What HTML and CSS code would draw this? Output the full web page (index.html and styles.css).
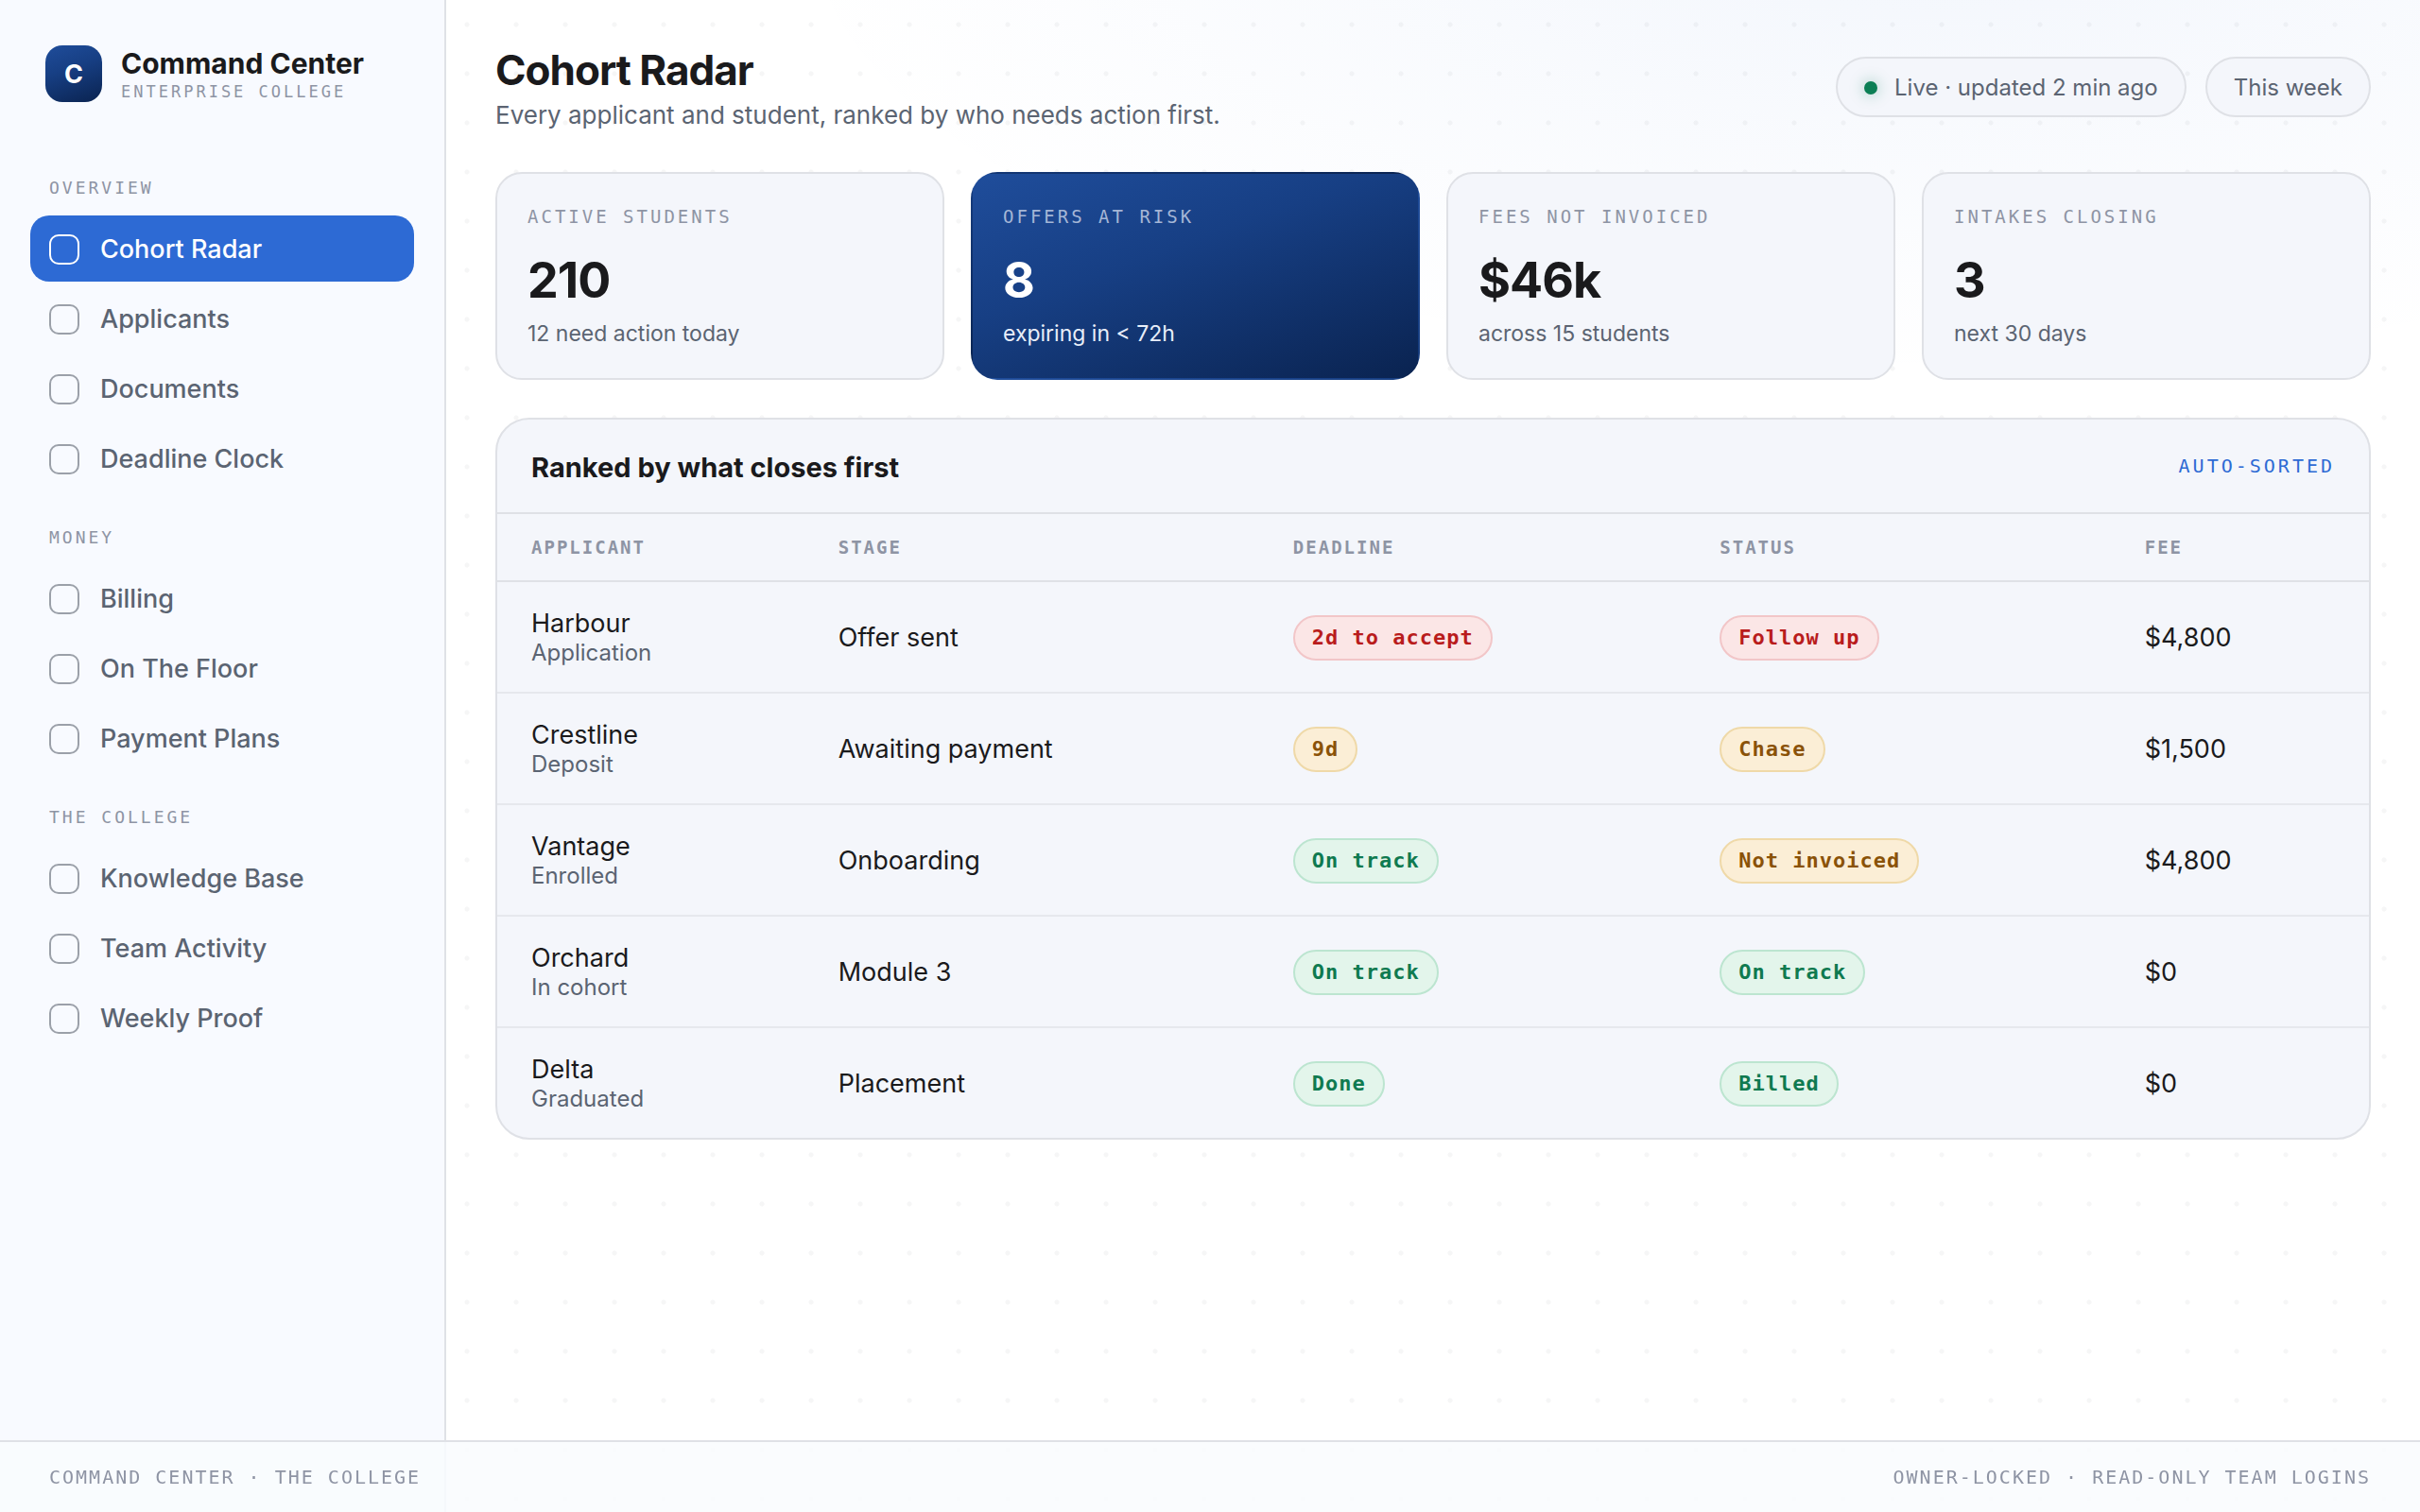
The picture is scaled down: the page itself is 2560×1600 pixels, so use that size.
FILE: index.html
```html
<!DOCTYPE html>
<html lang="en">
<head>
  <meta charset="utf-8">
  <meta name="viewport" content="width=device-width, initial-scale=1">
  <title>Command Center – Cohort Radar</title>
  <link rel="stylesheet" href="styles.css">
</head>
<body>
  <div class="app">
    <aside class="sidebar">
      <div class="brand">
        <div class="brand-mark">C</div>
        <div>
          <div class="brand-name">Command Center</div>
          <div class="brand-sub">ENTERPRISE COLLEGE</div>
        </div>
      </div>
      <nav class="nav">
        <section class="nav-group">
          <h2 class="nav-label">OVERVIEW</h2>
          <a class="nav-item is-active" href="#cohort-radar" aria-current="page"><span class="nav-icon"></span>Cohort Radar</a>
          <a class="nav-item" href="#applicants"><span class="nav-icon"></span>Applicants</a>
          <a class="nav-item" href="#documents"><span class="nav-icon"></span>Documents</a>
          <a class="nav-item" href="#deadline-clock"><span class="nav-icon"></span>Deadline Clock</a>
        </section>
        <section class="nav-group">
          <h2 class="nav-label">MONEY</h2>
          <a class="nav-item" href="#billing"><span class="nav-icon"></span>Billing</a>
          <a class="nav-item" href="#on-the-floor"><span class="nav-icon"></span>On The Floor</a>
          <a class="nav-item" href="#payment-plans"><span class="nav-icon"></span>Payment Plans</a>
        </section>
        <section class="nav-group">
          <h2 class="nav-label">THE COLLEGE</h2>
          <a class="nav-item" href="#knowledge-base"><span class="nav-icon"></span>Knowledge Base</a>
          <a class="nav-item" href="#team-activity"><span class="nav-icon"></span>Team Activity</a>
          <a class="nav-item" href="#weekly-proof"><span class="nav-icon"></span>Weekly Proof</a>
        </section>
      </nav>
    </aside>

    <main class="main">
      <header class="page-head">
        <div>
          <h1 class="page-title">Cohort Radar</h1>
          <p class="page-sub">Every applicant and student, ranked by who needs action first.</p>
        </div>
        <div class="page-tools">
          <div class="chip"><span class="live-dot"></span>Live · updated 2 min ago</div>
          <button class="chip" type="button">This week</button>
        </div>
      </header>

      <section class="stats">
        <article class="stat">
          <div class="stat-label">ACTIVE STUDENTS</div>
          <div class="stat-value">210</div>
          <div class="stat-note">12 need action today</div>
        </article>
        <article class="stat stat-accent">
          <div class="stat-label">OFFERS AT RISK</div>
          <div class="stat-value">8</div>
          <div class="stat-note">expiring in &lt; 72h</div>
        </article>
        <article class="stat">
          <div class="stat-label">FEES NOT INVOICED</div>
          <div class="stat-value">$46k</div>
          <div class="stat-note">across 15 students</div>
        </article>
        <article class="stat">
          <div class="stat-label">INTAKES CLOSING</div>
          <div class="stat-value">3</div>
          <div class="stat-note">next 30 days</div>
        </article>
      </section>

      <section class="panel">
        <div class="panel-head">
          <h2 class="panel-title">Ranked by what closes first</h2>
          <span class="panel-tag">AUTO-SORTED</span>
        </div>
        <table class="ranking">
          <thead>
            <tr>
              <th class="col-applicant" scope="col">APPLICANT</th>
              <th class="col-stage" scope="col">STAGE</th>
              <th class="col-deadline" scope="col">DEADLINE</th>
              <th class="col-status" scope="col">STATUS</th>
              <th class="col-fee" scope="col">FEE</th>
            </tr>
          </thead>
          <tbody>
            <tr>
              <td><div class="who">Harbour</div><div class="who-sub">Application</div></td>
              <td>Offer sent</td>
              <td><span class="pill pill-red">2d to accept</span></td>
              <td><span class="pill pill-red">Follow up</span></td>
              <td>$4,800</td>
            </tr>
            <tr>
              <td><div class="who">Crestline</div><div class="who-sub">Deposit</div></td>
              <td>Awaiting payment</td>
              <td><span class="pill pill-amber">9d</span></td>
              <td><span class="pill pill-amber">Chase</span></td>
              <td>$1,500</td>
            </tr>
            <tr>
              <td><div class="who">Vantage</div><div class="who-sub">Enrolled</div></td>
              <td>Onboarding</td>
              <td><span class="pill pill-green">On track</span></td>
              <td><span class="pill pill-amber">Not invoiced</span></td>
              <td>$4,800</td>
            </tr>
            <tr>
              <td><div class="who">Orchard</div><div class="who-sub">In cohort</div></td>
              <td>Module 3</td>
              <td><span class="pill pill-green">On track</span></td>
              <td><span class="pill pill-green">On track</span></td>
              <td>$0</td>
            </tr>
            <tr>
              <td><div class="who">Delta</div><div class="who-sub">Graduated</div></td>
              <td>Placement</td>
              <td><span class="pill pill-green">Done</span></td>
              <td><span class="pill pill-green">Billed</span></td>
              <td>$0</td>
            </tr>
          </tbody>
        </table>
      </section>
    </main>
  </div>

  <footer class="footer">
    <span>COMMAND CENTER · THE COLLEGE</span>
    <span>OWNER-LOCKED · READ-ONLY TEAM LOGINS</span>
  </footer>
</body>
</html>
```
FILE: styles.css
```css
:root {
  --ink: #1a1a1c;
  --muted: #5b6472;
  --dim: #8e94a4;
  --line: #dfe1e6;
  --line-soft: #e6e8ed;
  --surface: #f4f6fb;
  --blue: #2d6ad4;
  --navy: linear-gradient(160deg, #1f4d9b, #173f84 40%, #0a2350);
  --sans: "Inter", "Open Sans", sans-serif;
  --mono: "DejaVu Sans Mono", "Liberation Mono", monospace;
}

* {
  box-sizing: border-box;
}

body {
  margin: 0;
  color: var(--ink);
  font-family: var(--sans);
  font-size: 27px;
  line-height: 32px;
  background-color: #fff;
  background-image:
    radial-gradient(circle, rgba(20, 24, 32, 0.04) 2px, transparent 3px),
    radial-gradient(ellipse 48% 30% at 80% -5%, rgba(45, 106, 212, 0.06), transparent);
  background-size: 52px 52px, 100% 100vh;
  background-repeat: repeat, no-repeat;
}

h1,
h2,
p {
  margin: 0;
}

.app {
  display: flex;
  min-height: 100vh;
}

/* Sidebar */
.sidebar {
  flex: 0 0 472px;
  padding: 48px 32px 108px;
  background: #f8faff;
  border-right: 2px solid var(--line);
}

.brand {
  display: flex;
  align-items: center;
  gap: 20px;
  padding: 0 16px;
  margin-bottom: 79px;
}

.brand-mark {
  display: grid;
  place-items: center;
  width: 60px;
  height: 60px;
  padding-top: 2px;
  border-radius: 18px;
  background: var(--navy);
  color: #fff;
  font-size: 27px;
  font-weight: 700;
}

.brand-name {
  font-size: 30px;
  font-weight: 700;
  line-height: 38px;
}

.brand-sub {
  color: var(--dim);
  font-family: var(--mono);
  font-size: 17px;
  line-height: 22px;
  letter-spacing: 3px;
}

.nav {
  display: flex;
  flex-direction: column;
  gap: 37px;
}

.nav-group {
  display: flex;
  flex-direction: column;
  gap: 4px;
}

.nav-label {
  padding: 0 20px;
  margin-bottom: 13px;
  color: var(--dim);
  font-family: var(--mono);
  font-size: 18px;
  font-weight: 400;
  line-height: 24px;
  letter-spacing: 3px;
}

.nav-item {
  display: flex;
  align-items: center;
  gap: 22px;
  height: 70px;
  padding: 2px 20px 0;
  border-radius: 20px;
  color: var(--muted);
  font-weight: 500;
  text-decoration: none;
}

.nav-icon {
  width: 32px;
  height: 32px;
  border: 2px solid #9ba0a9;
  border-radius: 10px;
}

.nav-item.is-active {
  background: var(--blue);
  color: #fff;
}

.is-active .nav-icon {
  border-color: #fff;
}

/* Main column */
.main {
  flex: 1;
  min-width: 0;
  padding: 46px 52px 128px;
}

.page-head {
  display: flex;
  align-items: center;
  justify-content: space-between;
  margin-bottom: 44px;
}

.page-title {
  margin-bottom: 4px;
  font-size: 44px;
  font-weight: 700;
  line-height: 56px;
  letter-spacing: -1px;
}

.page-sub {
  color: var(--muted);
  font-size: 26px;
  line-height: 32px;
}

.page-tools {
  display: flex;
  gap: 20px;
}

.chip {
  display: flex;
  align-items: center;
  gap: 18px;
  padding: 16px 28px 14px;
  border: 2px solid var(--line);
  border-radius: 32px;
  background: var(--surface);
  color: var(--muted);
  font-family: var(--sans);
  font-size: 24px;
  line-height: 30px;
}

.live-dot {
  width: 14px;
  height: 14px;
  border-radius: 50%;
  background: #0c7f55;
  box-shadow: 0 0 16px rgba(12, 127, 85, 0.4);
}

/* Stat cards */
.stats {
  display: grid;
  grid-template-columns: repeat(4, 1fr);
  gap: 28px;
  margin-bottom: 40px;
}

.stat {
  padding: 32px;
  border: 2px solid var(--line);
  border-radius: 28px;
  background: var(--surface);
}

.stat-label {
  margin-bottom: 24px;
  color: var(--dim);
  font-family: var(--mono);
  font-size: 19px;
  line-height: 26px;
  letter-spacing: 3px;
}

.stat-value {
  margin-bottom: 10px;
  font-size: 52px;
  font-weight: 700;
  line-height: 62px;
  letter-spacing: -1px;
}

.stat-note {
  color: var(--muted);
  font-size: 23px;
  line-height: 30px;
}

.stat-accent {
  border-color: transparent;
  background: var(--navy);
  color: #fff;
}

.stat-accent .stat-label {
  color: #a5b6d6;
}

.stat-accent .stat-note {
  color: #e8eef9;
}

/* Ranking panel */
.panel {
  overflow: hidden;
  border: 2px solid var(--line);
  border-radius: 36px;
  background: var(--surface);
}

.panel-head {
  display: flex;
  align-items: center;
  justify-content: space-between;
  padding: 28px 36px;
  border-bottom: 2px solid var(--line);
}

.panel-title {
  padding-top: 4px;
  font-size: 29px;
  font-weight: 700;
  line-height: 38px;
}

.panel-tag {
  color: var(--blue);
  font-family: var(--mono);
  font-size: 20px;
  line-height: 26px;
  letter-spacing: 3px;
}

.ranking {
  width: 100%;
  table-layout: fixed;
  border-collapse: separate;
  border-spacing: 0;
}

.ranking th {
  padding: 22px 36px;
  border-bottom: 2px solid var(--line);
  color: var(--dim);
  font-family: var(--mono);
  font-size: 19px;
  font-weight: 700;
  line-height: 26px;
  letter-spacing: 2px;
  text-align: left;
}

.ranking td {
  padding: 28px 36px 26px;
  border-bottom: 2px solid var(--line-soft);
  vertical-align: middle;
}

.ranking tbody tr:last-child td {
  border-bottom: 0;
}

.col-applicant { width: 16.4%; }
.col-stage { width: 24.3%; }
.col-deadline { width: 22.8%; }
.col-status { width: 22.7%; }
.col-fee { width: 13.8%; }

.who-sub {
  color: var(--muted);
  font-size: 24px;
  line-height: 30px;
}

.pill {
  display: inline-block;
  padding: 6px 18px;
  border: 2px solid;
  border-radius: 24px;
  font-family: var(--mono);
  font-size: 22px;
  font-weight: 700;
  line-height: 32px;
  letter-spacing: 1px;
  vertical-align: top;
  white-space: nowrap;
}

.pill-red {
  border-color: #f2c6c8;
  background: #fbe6e6;
  color: #b91c1c;
}

.pill-amber {
  border-color: #efd9a8;
  background: #fbeed6;
  color: #8a5208;
}

.pill-green {
  border-color: #bce5d0;
  background: #e3f5eb;
  color: #0f7a50;
}

/* Status bar pinned over the bottom of the window */
.footer {
  position: fixed;
  right: 0;
  bottom: 0;
  left: 0;
  display: flex;
  align-items: center;
  justify-content: space-between;
  padding: 24px 52px;
  border-top: 2px solid var(--line);
  background: rgba(249, 251, 254, 0.85);
  color: var(--dim);
  font-family: var(--mono);
  font-size: 20px;
  line-height: 26px;
  letter-spacing: 2px;
}
```
